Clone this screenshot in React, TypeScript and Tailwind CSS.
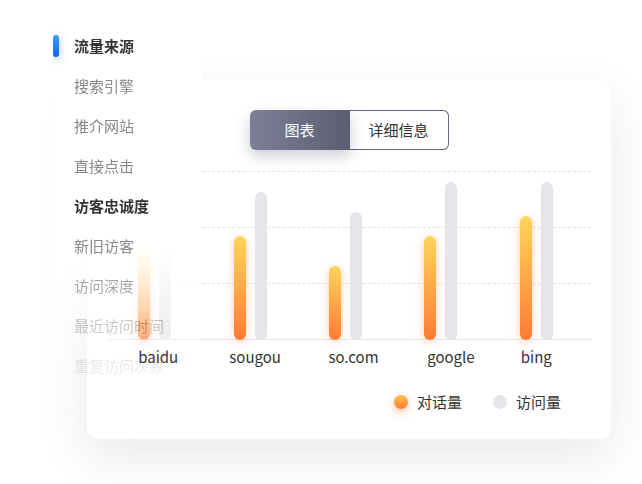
const menu = [
  { label: '流量来源', strong: true, active: true },
  { label: '搜索引擎' },
  { label: '推介网站' },
  { label: '直接点击' },
  { label: '访客忠诚度', strong: true },
  { label: '新旧访客' },
  { label: '访问深度' },
  { label: '最近访问时间' },
  { label: '重复访问次数' },
];

// shift = nudge of the x-axis label from the column centre
const data = [
  { name: 'baidu', talk: 95, visit: 97, shift: 7 },
  { name: 'sougou', talk: 104, visit: 148, shift: 10 },
  { name: 'so.com', talk: 74, visit: 128, shift: 16 },
  { name: 'google', talk: 104, visit: 158, shift: 20 },
  { name: 'bing', talk: 124, visit: 158, shift: 0 },
];

const font = "font-['Noto_Sans_CJK_SC','Noto_Sans',sans-serif]";

export default function App() {
  return (
    <div className={`relative h-[484px] w-[642px] overflow-hidden bg-white ${font}`}>
      <div className="pl-[87px] pt-[80px]">
        <div className="h-[359px] w-[524px] rounded-[10px] bg-white pt-[30px] shadow-[0_18px_50px_rgba(40,40,70,0.10)]">
          {/* tabs */}
          <div className="flex justify-center">
            <div className="flex h-[40px] w-[199px] text-[15px]">
              <div className="z-10 flex w-[100px] items-center justify-center rounded-l-[6px] bg-gradient-to-r from-[#7c8097] to-[#5b5e72] text-white shadow-[0_6px_14px_rgba(60,60,90,0.25)]">
                图表
              </div>
              <div className="flex flex-1 items-center justify-center rounded-r-[6px] border border-l-0 border-[#62657a] text-[#333]">
                详细信息
              </div>
            </div>
          </div>

          {/* chart */}
          <div className="mx-[20px] mt-[21px]">
            <div className="relative h-[169px]">
              <div className="absolute inset-0 flex flex-col">
                <div className="h-[56px] border-t border-dashed border-[#e2e2e6]" />
                <div className="h-[56px] border-t border-dashed border-[#e2e2e6]" />
                <div className="h-[56px] border-t border-dashed border-[#e2e2e6]" />
                <div className="flex-1 border-b border-[#e6e6ea]" />
              </div>
              <div className="relative grid h-full grid-cols-5 pr-[7px]">
                {data.map((d) => (
                  <div key={d.name} className="flex items-end justify-center gap-[9px]">
                    <div
                      className="w-[12px] rounded-full bg-gradient-to-b from-[#ffd45c] to-[#ff7a32] shadow-[0_2px_10px_rgba(255,120,50,0.35)]"
                      style={{ height: d.talk }}
                    />
                    <div className="w-[12px] rounded-full bg-[#e4e4e9]" style={{ height: d.visit }} />
                  </div>
                ))}
              </div>
            </div>
            <div className="relative z-20 grid h-[34px] grid-cols-5 pr-[7px] text-[15px] text-[#333]">
              {data.map((d) => (
                <div key={d.name} className="flex items-center justify-center" style={{ paddingLeft: d.shift }}>
                  {d.name}
                </div>
              ))}
            </div>
          </div>

          {/* legend */}
          <div className="mt-[18px] flex h-[20px] items-center justify-end gap-[31px] pr-[50px] text-[15px] text-[#333]">
            <div className="flex items-center gap-[9px]">
              <span className="h-[14px] w-[14px] rounded-full bg-gradient-to-b from-[#ffc24a] to-[#ff7a32] shadow-[0_3px_8px_rgba(255,120,50,0.45)]" />
              对话量
            </div>
            <div className="flex items-center gap-[9px]">
              <span className="h-[14px] w-[14px] rounded-full bg-[#e4e4e9]" />
              访问量
            </div>
          </div>
        </div>
      </div>

      {/* side menu, overlapping the chart card */}
      <div className="absolute left-[53px] top-[19px] z-10 h-[376px] w-[149px] rounded-r-[8px] rounded-l-[4px] bg-white pt-[7px] shadow-[0_10px_40px_rgba(40,40,70,0.12)] [mask-image:linear-gradient(to_bottom,black_60%,transparent_100%)]">
        {menu.map((m) => (
          <div key={m.label} className="relative flex h-[40px] items-center pl-[21px] text-[15px]">
            {m.active && (
              <span className="absolute left-0 top-[9px] h-[22px] w-[6px] rounded-full bg-gradient-to-b from-[#3d9dff] to-[#1565dd] shadow-[0_2px_8px_rgba(30,110,230,0.45)]" />
            )}
            <span className={m.strong ? 'font-bold text-[#333]' : 'text-[#888]'}>{m.label}</span>
          </div>
        ))}
      </div>
    </div>
  );
}
